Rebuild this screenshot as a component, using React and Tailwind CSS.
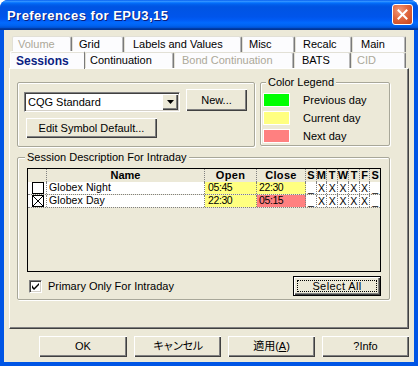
import React from "react";

function Tab({ className = "", children, disabled, selected }) {
  if (selected) {
    return (
      <div
        className={`relative z-10 -mt-[1px] h-[18px] flex items-center bg-[#FCFCFE] border-t border-l border-white shadow-[inset_0_1px_0_#E4E2D8] border-r border-r-[#7A7A7A] rounded-t-[2px] text-[12px] font-bold text-[#0A1E82] ${className}`}
      >
        {children}
      </div>
    );
  }
  return (
    <div
      className={`h-[16px] flex items-center bg-[#FCFCFE] border-t border-l border-[#E2E0D6] border-r border-r-[#7A7A7A] shadow-[inset_-1px_0_0_#B8B8B8] rounded-t-[2px] text-[11px] ${
        disabled ? "text-[#ACA899]" : "text-black"
      } ${className}`}
    >
      {children}
    </div>
  );
}

function Btn({ className = "", children }) {
  return (
    <div
      className={`flex items-center justify-center bg-[#ECE9D8] shadow-[inset_1px_1px_0_#fff,inset_-1px_-1px_0_#404040,inset_-2px_-2px_0_#808080] text-[11px] text-black ${className}`}
    >
      {children}
    </div>
  );
}

function Swatch({ color, label }) {
  return (
    <div className="flex items-center h-[14px]">
      <div className={`w-[27px] h-[14px] border border-white ${color}`} />
      <span className="ml-[13px] text-[11px] leading-none">{label}</span>
    </div>
  );
}

function XBox({ checked }) {
  return (
    <div className="w-[12px] h-[12px] border border-black bg-white">
      {checked && (
        <svg width="10" height="10" viewBox="0 0 10 10" className="block">
          <path d="M0 0L10 10M10 0L0 10" stroke="#000" strokeWidth="1" />
        </svg>
      )}
    </div>
  );
}

function DayCells({ days }) {
  return days.map((d, i) => (
    <div
      key={i}
      className="flex-1 h-full bg-white border-r border-dotted border-[#808080] last:border-r-0 flex items-center justify-center text-[10.5px] leading-none"
    >
      {d === "_" ? <span className="self-end mb-[1px]">_</span> : d}
    </div>
  ));
}

function Row({ checked, name, open, close, closeColor }) {
  return (
    <div className="flex h-[13px] border-b border-dotted border-[#808080]">
      <div className="w-[19px] h-full bg-white border-r border-dotted border-[#808080] flex items-center pl-[4px]">
        <XBox checked={checked} />
      </div>
      <div className="w-[158px] h-full bg-white border-r border-dotted border-[#808080] flex items-center pl-[2px] text-[10.5px] tracking-[0.1px]">
        {name}
      </div>
      <div className="w-[52px] h-full bg-[#FFFF80] border-r border-dotted border-[#808080] flex items-center pl-[3px] text-[10.5px] tracking-[-0.4px]">
        {open}
      </div>
      <div className={`w-[49px] h-full ${closeColor} border-r border-dotted border-[#808080] flex items-center pl-[2px] text-[10.5px] tracking-[-0.4px]`}>
        {close}
      </div>
      <DayCells days={["_", "X", "X", "X", "X", "X", "_"]} />
    </div>
  );
}

export default function App() {
  return (
    <div className="w-[418px] h-[366px] flex flex-col bg-[#0055E5] rounded-t-[8px] overflow-hidden font-['Liberation_Sans','Noto_Sans_CJK_JP',Arial,sans-serif] text-black select-none">
      {/* Title bar */}
      <div className="h-[30px] shrink-0 flex items-center pl-[7px] pr-[5px] bg-[linear-gradient(180deg,#0058EE_0%,#3593FF_4%,#288EFF_6%,#127DFF_8%,#036FFC_10%,#0262EE_14%,#0057E5_20%,#0054E3_24%,#0055EB_56%,#005BF5_66%,#026AFE_76%,#0062EF_86%,#0052D6_92%,#0040AB_94%,#003092_100%)]">
        <span className="text-white font-bold text-[13px] tracking-[0.45px] leading-none [text-shadow:1px_1px_0_#0A1E7A]">
          Preferences for EPU3,15
        </span>
        <div className="ml-auto mb-[1px] w-[21px] h-[21px] rounded-[3px] border border-white bg-[radial-gradient(circle_at_35%_30%,#F19A7C_0%,#E0673F_45%,#C6431A_100%)] flex items-center justify-center">
          <svg width="11" height="11" viewBox="0 0 11 11">
            <path d="M1.5 1.5L9.5 9.5M9.5 1.5L1.5 9.5" stroke="#fff" strokeWidth="2" strokeLinecap="square" />
          </svg>
        </div>
      </div>

      {/* Body */}
      <div className="flex-1 mx-[4px] mb-[4px] bg-[#ECE9D8] flex flex-col pt-[6px] px-[5px]">
        {/* Tab row 1 */}
        <div className="flex h-[16px] ml-[3px]">
          <Tab disabled className="w-[60px] pl-[5px]">Volume</Tab>
          <Tab className="w-[52px] pl-[6px]">Grid</Tab>
          <Tab className="w-[118px] pl-[8px]">Labels and Values</Tab>
          <Tab className="w-[53px] pl-[6px]">Misc</Tab>
          <Tab className="w-[57px] pl-[7px]">Recalc</Tab>
          <Tab className="w-[54px] pl-[8px]">Main</Tab>
        </div>
        {/* Tab row 2 */}
        <div className="flex h-[16px] ml-[1px] items-start">
          <Tab selected className="w-[75px] pl-[5px]">Sessions</Tab>
          <Tab className="w-[89px] pl-[4px]">Continuation</Tab>
          <Tab disabled className="w-[120px] pl-[7px]">Bond Continuation</Tab>
          <Tab className="w-[57px] pl-[7px]">BATS</Tab>
          <Tab disabled className="w-[55px] pl-[5px]">CID</Tab>
        </div>

        {/* Panel */}
        <div className="w-[400px] h-[261px] bg-[#ECE9D8] border border-t-white border-l-white border-r-[#404040] border-b-[#404040] shadow-[inset_-1px_-1px_0_#808080] pl-[7px] pt-[13px] flex flex-col">
          <div className="flex">
            {/* left group */}
            <div className="w-[238px] h-[65px] border border-[#A8A799] rounded-[2px] shadow-[inset_1px_1px_0_#fff,1px_1px_0_#fff] pl-[6px] pt-[6px] flex flex-col">
              <div className="flex items-start">
                <div className="mt-[3px] w-[156px] h-[20px] bg-white border border-t-[#808080] border-l-[#808080] border-r-white border-b-white shadow-[inset_1px_1px_0_#404040,inset_-1px_-1px_0_#D4D0C8] flex items-center">
                  <span className="pl-[3px] text-[11px] leading-none">CQG Standard</span>
                  <div className="ml-auto mr-[1px] w-[16px] h-[16px] bg-[#ECE9D8] shadow-[inset_1px_1px_0_#fff,inset_-1px_-1px_0_#404040,inset_-2px_-2px_0_#808080] flex items-center justify-center">
                    <svg width="7" height="4" viewBox="0 0 7 4">
                      <path d="M0 0H7L3.5 4Z" fill="#000" />
                    </svg>
                  </div>
                </div>
                <Btn className="ml-[6px] w-[61px] h-[22px]">New...</Btn>
              </div>
              <Btn className="mt-[6px] ml-[2px] w-[131px] h-[20px]">Edit Symbol Default...</Btn>
            </div>

            {/* Color legend */}
            <div className="relative ml-[5px] w-[130px] h-[64px] border border-[#A8A799] rounded-[2px] shadow-[inset_1px_1px_0_#fff,1px_1px_0_#fff] pl-[2px] pt-[10px] flex flex-col gap-[4px]">
              <span className="absolute -top-[7px] left-[5px] px-[2px] bg-[#ECE9D8] text-[11px] leading-[13px]">
                Color Legend
              </span>
              <Swatch color="bg-[#00FF00]" label="Previous day" />
              <Swatch color="bg-[#FFFF80]" label="Current day" />
              <Swatch color="bg-[#FF8080]" label="Next day" />
            </div>
          </div>

          {/* Session group */}
          <div className="relative mt-[10px] w-[373px] h-[143px] border border-[#A8A799] rounded-[2px] shadow-[inset_1px_1px_0_#fff,1px_1px_0_#fff] pl-[9px] pt-[10px] flex flex-col">
            <span className="absolute -top-[7px] left-[7px] px-[2px] bg-[#ECE9D8] text-[11px] leading-[13px]">
              Session Description For Intraday
            </span>
            {/* table */}
            <div className="w-[354px] h-[104px] border border-black bg-[#ECE9D8] flex flex-col">
              <div className="flex h-[13px] text-[11px] font-bold leading-none">
                <div className="w-[19px] h-full border-r border-dotted border-[#808080]" />
                <div className="w-[158px] h-full border-r border-dotted border-[#808080] flex items-center justify-center">Name</div>
                <div className="w-[52px] h-full border-r border-dotted border-[#808080] flex items-center justify-center tracking-[0.3px]">Open</div>
                <div className="w-[49px] h-full border-r border-dotted border-[#808080] flex items-center justify-center tracking-[0.3px]">Close</div>
                {["S", "M", "T", "W", "T", "F", "S"].map((d, i) => (
                  <div key={i} className="flex-1 h-full border-r border-dotted border-[#808080] last:border-r-0 flex items-center justify-center">
                    {d}
                  </div>
                ))}
              </div>
              <Row name="Globex Night" open="05:45" close="22:30" closeColor="bg-[#FFFF80]" />
              <Row checked name="Globex Day" open="22:30" close="05:15" closeColor="bg-[#FF8080]" />
            </div>

            {/* bottom row */}
            <div className="mt-[4px] w-[354px] h-[20px] flex items-center justify-between">
              <div className="flex items-center ml-[2px]">
                <div className="w-[13px] h-[13px] bg-white border border-t-[#808080] border-l-[#808080] border-r-white border-b-white shadow-[inset_1px_1px_0_#404040,inset_-1px_-1px_0_#D4D0C8] flex items-center justify-center">
                  <svg width="7" height="7" viewBox="0 0 7 7">
                    <path d="M0 2L0 5L2 7L7 2L7 0L2 5Z" fill="#000" />
                  </svg>
                </div>
                <span className="ml-[6px] text-[11px] leading-none">Primary Only For Intraday</span>
              </div>
              <div className="w-[88px] h-[20px] border border-black bg-[#ECE9D8] shadow-[inset_1px_1px_0_#fff,inset_-1px_-1px_0_#404040,inset_-2px_-2px_0_#808080] p-[3px]">
                <div className="w-full h-full border border-dotted border-black flex items-center justify-center text-[11px] tracking-[0.4px] leading-none">
                  Select All
                </div>
              </div>
            </div>
          </div>
        </div>

        {/* Dialog buttons */}
        <div className="mt-[7px] flex justify-end gap-[7px]">
          <Btn className="w-[88px] h-[21px]">OK</Btn>
          <Btn className="w-[87px] h-[21px] tracking-[-1.2px]">キャンセル</Btn>
          <Btn className="w-[87px] h-[21px]">
            <span>
              適用(<span className="underline">A</span>)
            </span>
          </Btn>
          <Btn className="w-[87px] h-[21px]">?Info</Btn>
        </div>
      </div>
    </div>
  );
}
